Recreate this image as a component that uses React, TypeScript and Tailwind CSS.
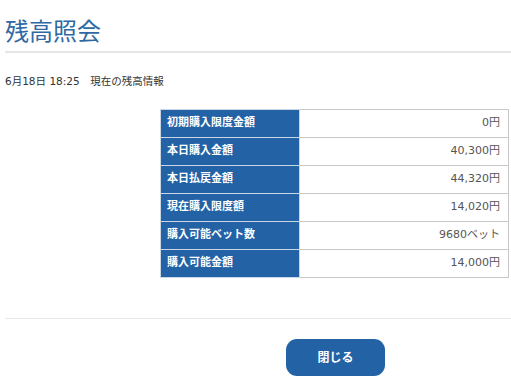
import React from "react";

const rows: [string, string][] = [
  ["初期購入限度金額", "0円"],
  ["本日購入金額", "40,300円"],
  ["本日払戻金額", "44,320円"],
  ["現在購入限度額", "14,020円"],
  ["購入可能ベット数", "9680ベット"],
  ["購入可能金額", "14,000円"],
];

export default function App() {
  return (
    <div
      className="w-[511px] h-[382px] bg-white overflow-hidden"
      style={{ fontFamily: '"DejaVu Sans", "Noto Sans CJK JP", sans-serif' }}
    >
      <div className="pl-[5px]">
        <h1
          className="pt-[15px] pb-[6px] text-[24px] leading-[30px] text-[#2f69a5] font-normal"
          style={{ fontFamily: '"Noto Sans CJK JP", sans-serif' }}
        >
          残高照会
        </h1>
        <div className="h-[2px] bg-[#e6e6e6]" />
        <p className="mt-[21px] text-[10.5px] leading-[14px] text-[#333]">
          6月18日 18:25　現在の残高情報
        </p>
        <div className="mt-[21px] ml-[155px] w-[349px]">
          <table className="w-full border-collapse border border-[#c8c8c8] text-[11px]">
            <tbody>
              {rows.map(([k, v]) => (
                <tr key={k} className="h-[28px]">
                  <th className="w-[139px] bg-[#2462a6] text-white font-bold text-left pl-[6px] border border-[#c8d6e6]">
                    {k}
                  </th>
                  <td className="text-right pr-[8px] text-[#555] border border-[#c8c8c8]">
                    {v}
                  </td>
                </tr>
              ))}
            </tbody>
          </table>
        </div>
        <div className="mt-[40px] h-px bg-[#e8e8e8]" />
        <div className="mt-[20px]">
          <button className="ml-[281px] w-[99px] h-[37px] rounded-[11px] bg-[#2462a6] text-white font-bold text-[12px]">
            閉じる
          </button>
        </div>
      </div>
    </div>
  );
}
